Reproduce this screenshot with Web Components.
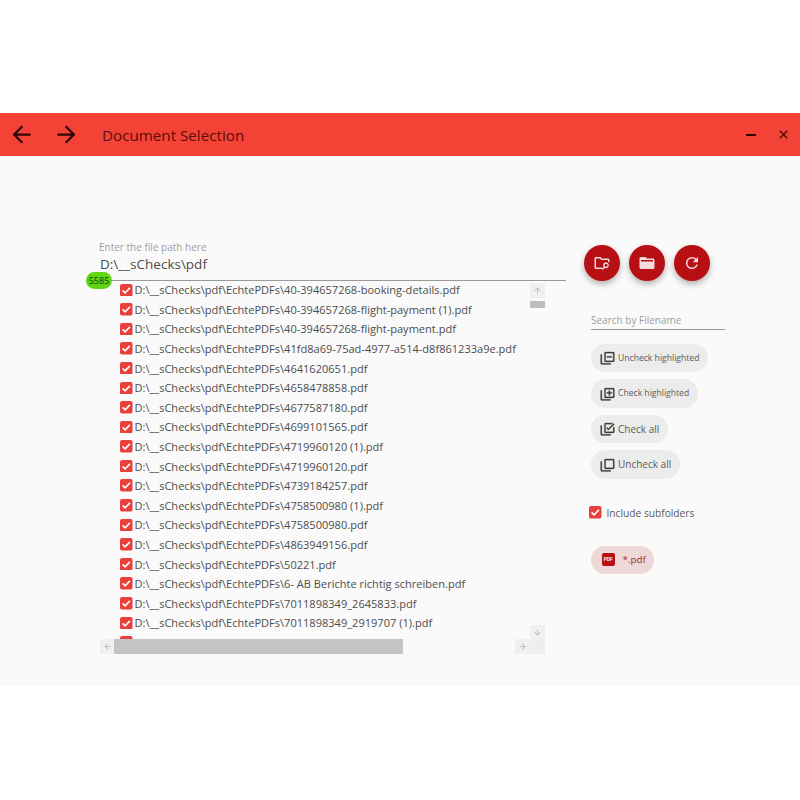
<!DOCTYPE html>
<html><head><meta charset="utf-8"><title>Document Selection</title>
<style>
html,body{margin:0;padding:0;background:#fff;height:800px;overflow:hidden}
body{font-family:"Open Sans","Noto Sans",sans-serif;color:#444}
</style></head>
<body>
<app-window>
  <title-bar slot="bar" heading="Document Selection"></title-bar>
  <path-field slot="left" label="Enter the file path here" value="D:\__sChecks\pdf" count="5585"></path-field>
  <file-list slot="left"></file-list>
  <action-panel slot="right"></action-panel>
</app-window>
<script>
const def=(name,html,init)=>customElements.define(name,class extends HTMLElement{
  connectedCallback(){
    if(this.shadowRoot)return;
    const r=this.attachShadow({mode:'open'});
    r.innerHTML=typeof html==='function'?html(this):html;
    if(init)init(r,this);
  }
});
const icons={
 back:'<path d="M20 11H7.83l5.59-5.59L12 4l-8 8 8 8 1.41-1.41L7.83 13H20v-2z"/>',
 fwd:'<path d="M12 4l-1.41 1.41L16.17 11H4v2h12.17l-5.58 5.59L12 20l8-8z"/>',
 search:'<path d="M20 6h-8l-2-2H4c-1.1 0-2 .9-2 2v12c0 1.1.9 2 2 2h8v-2H4V6h5.17l2 2H20v2.5h2V8c0-1.1-.9-2-2-2z"/><path d="M17.5 11a4 4 0 0 0-3.3 6.3l-2.7 2.7 1.4 1.4 2.7-2.7A4 4 0 1 0 17.500 11zm0 6a2 2 0 1 1 0-4 2 2 0 0 1 0 4z"/>',
 folder:'<path d="M20 6h-8l-2-2H4c-1.1 0-1.99.9-1.99 2L2 18c0 1.1.9 2 2 2h16c1.1 0 2-.9 2-2V8c0-1.1-.9-2-2-2zm0 12H4V8h16v10z"/><path d="M3 10h18v8a1 1 0 0 1-1 1H4a1 1 0 0 1-1-1z"/>',
 refresh:'<path d="M17.65 6.35A7.96 7.96 0 0 0 12 4a8 8 0 1 0 7.73 10h-2.08A6 6 0 1 1 12 6c1.66 0 3.14.69 4.22 1.78L13 11h7V4l-2.35 2.35z"/>',
 minus:'<path d="M21 3H9c-1.1 0-2 .9-2 2v12c0 1.1.9 2 2 2h12c1.1 0 2-.9 2-2V5c0-1.1-.9-2-2-2zm0 14H9V5h12v12z"/><path d="M3 7H1v14c0 1.1.9 2 2 2h14v-2H3V7z"/><path d="M11 10h8v2h-8z"/>',
 plus:'<path d="M21 3H9c-1.1 0-2 .9-2 2v12c0 1.1.9 2 2 2h12c1.1 0 2-.9 2-2V5c0-1.1-.9-2-2-2zm0 14H9V5h12v12z"/><path d="M3 7H1v14c0 1.1.9 2 2 2h14v-2H3V7z"/><path d="M11 10h3V7h2v3h3v2h-3v3h-2v-3h-3z"/>',
 check:'<path d="M21 3H9c-1.1 0-2 .9-2 2v12c0 1.1.9 2 2 2h12c1.1 0 2-.9 2-2v-7h-2v7H9V5h10V3z"/><path d="M3 7H1v14c0 1.1.9 2 2 2h14v-2H3V7z"/><path d="M13.5 14.6l-3.2-3.2 1.4-1.4 1.8 1.8L21.6 4 23 5.4z"/>',
 blank:'<path d="M21 3H9c-1.1 0-2 .9-2 2v12c0 1.1.9 2 2 2h12c1.1 0 2-.9 2-2V5c0-1.1-.9-2-2-2zm0 14H9V5h12v12z"/><path d="M3 7H1v14c0 1.1.9 2 2 2h14v-2H3V7z"/>'
};
const svg=(n,s,c='currentColor',extra='')=>`<svg width="${s}" height="${s}" viewBox="0 0 24 24" fill="${c}" ${extra} aria-hidden="true">${icons[n]}</svg>`;

def('app-window',`<style>
:host{display:block;padding-top:113px}
.win{height:573px;background:#fafafa;display:flex;flex-direction:column}
.body{flex:1;display:flex;padding:0 0 0 99px;min-height:0}
.left{width:467px;padding-top:82px;display:flex;flex-direction:column}
.right{padding-top:89px;margin-left:18px;flex:1}
</style><div class="win"><slot name="bar"></slot><div class="body"><div class="left"><slot name="left"></slot></div><div class="right"><slot name="right"></slot></div></div></div>`);

def('title-bar',h=>`<style>
:host{display:flex;align-items:center;height:43px;background:#f44336;position:relative}
svg{display:block}
.nav{display:flex;gap:18px;margin-left:8px;color:#2a0705}
h1{font:400 15.2px "Open Sans",sans-serif;margin:0 0 0 22px;color:#570f0b}
.win{margin-left:auto;display:flex;align-items:center;gap:23px;margin-right:12px}
.min{width:10px;height:2px;background:#2a0705}
</style><div class="nav">${svg('back',27)}${svg('fwd',27)}</div><h1>${h.getAttribute('heading')}</h1>
<div class="win"><span class="min"></span><svg width="9" height="9" viewBox="0 0 9 9" stroke="#4a0d0a" stroke-width="1.4"><path d="M.8.8l7.4 7.4M8.2.8L.8 8.2"/></svg></div>`);

def('path-field',h=>`<style>
:host{display:block;position:relative;height:42px;border-bottom:1px solid #9a9a9a}
.l{font-size:10px;color:#9e9e9e;line-height:14px;padding-top:2px}
.v{font-size:13.5px;color:#4a4a4a;line-height:20px;padding-left:1px}
.b{position:absolute;left:-13px;top:34px;width:26px;height:17px;border-radius:9px;background:#5fd514;color:#123d00;font-size:9px;line-height:17px;text-align:center}
</style><div class="l">${h.getAttribute('label')}</div><div class="v">${h.getAttribute('value')}</div><div class="b">${h.getAttribute('count')}</div>`);

const P='D:\\__sChecks\\pdf\\EchtePDFs\\';
const files=['40-394657268-booking-details.pdf','40-394657268-flight-payment (1).pdf','40-394657268-flight-payment.pdf','41fd8a69-75ad-4977-a514-d8f861233a9e.pdf','4641620651.pdf','4658478858.pdf','4677587180.pdf','4699101565.pdf','4719960120 (1).pdf','4719960120.pdf','4739184257.pdf','4758500980 (1).pdf','4758500980.pdf','4863949156.pdf','50221.pdf','6- AB Berichte richtig schreiben.pdf','7011898349_2645833.pdf','7011898349_2919707 (1).pdf','7011898349_2919707 (2).pdf'];

def('check-box',`<style>
:host{display:inline-block;width:12.5px;height:12.5px;flex:none}
svg{display:block}
</style><svg width="12.5" height="12.5" viewBox="0 0 13 13"><rect width="13" height="13" rx="2" fill="#e8403c"/><path d="M2.7 6.6l2.6 2.6 5-5.2" fill="none" stroke="#fff" stroke-width="1.6"/></svg>`);

def('file-row',h=>`<style>
:host{display:flex;align-items:center;height:19.6px;white-space:nowrap;font-size:11.05px;color:#4d4d4d}
check-box{margin-right:2px}
</style><check-box></check-box><span><slot></slot></span>`);

def('scroll-btn',h=>`<style>
:host{width:15px;height:15px;background:#f0f0f0;display:flex;align-items:center;justify-content:center;color:#b5b5b5;flex:none}
</style><svg width="9" height="9" viewBox="0 0 24 24" fill="currentColor"><g transform="rotate(${h.getAttribute('rot')} 12 12)"><path d="M4 12l1.41 1.41L11 7.83V20h2V7.83l5.58 5.59L20 12l-8-8z"/></g></svg>`);

def('file-list',`<style>
:host{display:block;position:relative;height:358px;width:446px}
.rows{position:absolute;left:21px;top:-1px;width:409px;height:359px;overflow:hidden}
.v{position:absolute;left:431px;top:2px;width:15px;height:358px}
.vt{position:absolute;top:18px;width:15px;height:7px;background:#bdbdbd}
.vd{position:absolute;top:342px}
.h{position:absolute;left:1px;top:358px;width:445px;height:15px;display:flex}
.ht{position:absolute;left:14px;top:0;width:289px;height:15px;background:#c4c4c4}
.hr{position:absolute;left:415px;top:0}
.hc{position:absolute;left:430px;top:0;width:15px;height:15px;background:#eeeeee}
</style>
<div class="rows">${files.map(f=>`<file-row>${P}${f}</file-row>`).join('')}</div>
<div class="v"><scroll-btn rot="0"></scroll-btn><div class="vt"></div><scroll-btn class="vd" rot="180"></scroll-btn></div>
<div class="h"><scroll-btn rot="270"></scroll-btn><div class="ht"></div><scroll-btn class="hr" rot="90"></scroll-btn><div class="hc"></div></div>`);

def('round-btn',h=>`<style>
:host{display:flex;width:36px;height:36px;border-radius:50%;background:#b70f14;color:#f5dcdc;align-items:center;justify-content:center;box-shadow:0 3px 6px rgba(0,0,0,.3)}
</style>${svg(h.getAttribute('icon'),18)}`);

def('chip-btn',h=>`<style>
:host{display:inline-flex;align-items:center;height:28.5px;border-radius:15px;background:#ececec;color:#5a5a5a;padding:0 8.5px 0 9px;box-sizing:border-box;font-size:${h.getAttribute('fs')||10}px;white-space:nowrap}
svg{margin-right:3px;color:#3c3c3c;flex:none}
</style>${svg(h.getAttribute('icon'),15,'currentColor','stroke="currentColor" stroke-width=".4"')}<slot></slot>`);

def('action-panel',`<style>
:host{display:block;font-size:10.2px}
.fabs{display:flex;gap:9px}
.s{margin:23px 0 0 7px;width:134px;height:26px;box-sizing:border-box;padding-top:5px;border-bottom:1.5px solid #9a9a9a;color:#a0a0a0;line-height:22px;font-size:10px}
.chips{margin:13.5px 0 0 7px;display:flex;flex-direction:column;align-items:flex-start;gap:7px}
.inc{display:flex;align-items:center;margin:27px 0 0 5px;color:#5a5a5a;gap:5px;height:14px}
.pdf{display:inline-flex;align-items:center;margin:26px 0 0 6.5px;height:28px;width:63px;border-radius:14px;background:#efd7d7;color:#a52a2e;font-size:9.8px;box-sizing:border-box;padding-left:11px;gap:7.5px}
.ic{width:13.5px;height:13px;background:#b70f14;border-radius:2px;color:#fff;font:700 4.5px "Liberation Sans",sans-serif;line-height:13px;text-align:center;flex:none}
</style>
<div class="fabs"><round-btn icon="search"></round-btn><round-btn icon="folder"></round-btn><round-btn icon="refresh"></round-btn></div>
<div class="s">Search by Filename</div>
<div class="chips">
<chip-btn icon="minus" fs="8.6">Uncheck highlighted</chip-btn>
<chip-btn icon="plus" fs="8.6">Check highlighted</chip-btn>
<chip-btn icon="check">Check all</chip-btn>
<chip-btn icon="blank">Uncheck all</chip-btn>
</div>
<div class="inc"><check-box></check-box><span>Include subfolders</span></div>
<div class="pdf"><span class="ic">PDF</span><span>*.pdf</span></div>`);
</script>
</body></html>
